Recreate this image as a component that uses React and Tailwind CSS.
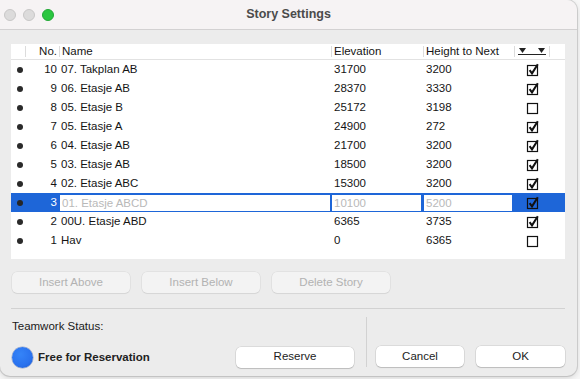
import React from "react";

const rows = [
  { no: 10, name: "07. Takplan AB", elev: "31700", next: "3200", on: true },
  { no: 9, name: "06. Etasje AB", elev: "28370", next: "3330", on: true },
  { no: 8, name: "05. Etasje B", elev: "25172", next: "3198", on: false },
  { no: 7, name: "05. Etasje A", elev: "24900", next: "272", on: true },
  { no: 6, name: "04. Etasje AB", elev: "21700", next: "3200", on: true },
  { no: 5, name: "03. Etasje AB", elev: "18500", next: "3200", on: true },
  { no: 4, name: "02. Etasje ABC", elev: "15300", next: "3200", on: true },
  { no: 3, name: "01. Etasje ABCD", elev: "10100", next: "5200", on: true, sel: true },
  { no: 2, name: "00U. Etasje ABD", elev: "6365", next: "3735", on: true },
  { no: 1, name: "Hav", elev: "0", next: "6365", on: false },
];

const Check = ({ on }) => (
  <svg width="14" height="14" viewBox="0 0 14 14">
    <rect x="1.5" y="2.5" width="10" height="10" fill="none" stroke="#111" strokeWidth="1.2" />
    {on && (
      <path d="M3.6 7.2 L6 10.4 L11.8 1.2" fill="none" stroke="#111" strokeWidth="2" strokeLinejoin="miter" />
    )}
  </svg>
);

const Sep = () => <div className="w-px h-[11px] bg-[#dcdcdc]" />;

const Button = ({ children, w, disabled }) => (
  <div
    className={`${w} h-[21px] rounded-[5px] flex items-center justify-center text-[11.5px] ${
      disabled
        ? "bg-[#f3f3f3] text-[#b2b2b2] shadow-[0_0_0_0.5px_rgba(0,0,0,0.08),0_1px_1px_rgba(0,0,0,0.06)]"
        : "bg-white text-[#1c1c1c] shadow-[0_0_0_0.5px_rgba(0,0,0,0.14),0_1px_1px_rgba(0,0,0,0.14)]"
    }`}
  >
    {children}
  </div>
);

export default function App() {
  return (
    <div className="w-[580px] h-[379px] bg-[#f7f7f7] overflow-hidden font-['Liberation_Sans',Arial,sans-serif]">
      <div className="w-[577px] h-[376px] rounded-tr-[10px] rounded-b-[10px] bg-[#ececec] overflow-hidden shadow-[0_0_0_1px_rgba(0,0,0,0.12),0_2px_6px_rgba(0,0,0,0.15)] flex flex-col">
        {/* title bar */}
        <div className="h-[30px] bg-[#f6f3f4] border-b border-[#d3d1d2] flex items-center">
          <div className="w-[60px] flex items-center gap-[7px] pl-[4px]">
            <div className="w-[12px] h-[12px] rounded-full bg-[#dcdbdb] border border-[#c8c7c7]" />
            <div className="w-[12px] h-[12px] rounded-full bg-[#dcdbdb] border border-[#c8c7c7]" />
            <div className="w-[12px] h-[12px] rounded-full bg-[#2bc640] border border-[#22a836]" />
          </div>
          <div className="flex-1 text-center text-[12.5px] font-bold text-[#4b4b4b]">Story Settings</div>
          <div className="w-[60px]" />
        </div>

        {/* table */}
        <div className="pt-[14px] pl-[11px] pr-[12px]">
          <div className="h-[215px] bg-white text-[11.5px] text-[#141414]">
            <div className="h-[16px] border-b border-[#e2e2e2] flex items-center">
              <div className="w-[15px] flex justify-end"><Sep /></div>
              <div className="w-[33px] flex items-center justify-end pr-[2px]">No.</div>
              <Sep />
              <div className="w-[271px] pl-[2px]">Name</div>
              <Sep />
              <div className="w-[91px] pl-[2px]">Elevation</div>
              <Sep />
              <div className="w-[90px] pl-[2px]">Height to Next</div>
              <Sep />
              <div className="w-[34px] flex justify-center">
                <div className="flex gap-[12px] border-b border-[#222] pb-[1px] px-[1px]">
                  <svg width="7" height="5" viewBox="0 0 7 5"><path d="M0 0 H7 L3.5 5 Z" fill="#222" /></svg>
                  <svg width="7" height="5" viewBox="0 0 7 5"><path d="M0 0 H7 L3.5 5 Z" fill="#222" /></svg>
                </div>
              </div>
              <Sep />
            </div>
            {rows.map((r) =>
              r.sel ? (
                <div key={r.no} className="h-[19px] bg-[#1e66d8] flex items-center">
                  <div className="w-[15px] flex justify-center pl-[2px]">
                    <div className="w-[6px] h-[6px] rounded-full bg-[#262626]" />
                  </div>
                  <div className="w-[33px] text-right pr-[2px] text-white">{r.no}</div>
                  <div className="w-[272px] h-[16px] pl-px pr-px">
                    <div className="h-full bg-white pl-[2px] text-[#b9b9b9] leading-[16px]">{r.name}</div>
                  </div>
                  <div className="w-[92px] h-[16px] pl-px pr-[2px]">
                    <div className="h-full bg-white pl-[2px] text-[#b9b9b9] leading-[16px]">{r.elev}</div>
                  </div>
                  <div className="w-[91px] h-[16px] pl-[1px] pr-[2px]">
                    <div className="h-full bg-white pl-[2px] text-[#b9b9b9] leading-[16px]">{r.next}</div>
                  </div>
                  <div className="w-[35px] flex justify-center pl-[3px]"><Check on={r.on} /></div>
                </div>
              ) : (
                <div key={r.no} className="h-[19px] flex items-center">
                  <div className="w-[15px] flex justify-center pl-[2px]">
                    <div className="w-[6px] h-[6px] rounded-full bg-[#2a2a2a]" />
                  </div>
                  <div className="w-[33px] text-right pr-[2px]">{r.no}</div>
                  <div className="w-[272px] pl-[2px]">{r.name}</div>
                  <div className="w-[92px] pl-[3px]">{r.elev}</div>
                  <div className="w-[91px] pl-[3px]">{r.next}</div>
                  <div className="w-[35px] flex justify-center pl-[3px]"><Check on={r.on} /></div>
                </div>
              )
            )}
          </div>
        </div>

        {/* story buttons */}
        <div className="flex gap-[12px] pl-[12px] pt-[13px]">
          <Button w="w-[118px]" disabled>Insert Above</Button>
          <Button w="w-[118px]" disabled>Insert Below</Button>
          <Button w="w-[118px]" disabled>Delete Story</Button>
        </div>

        <div className="ml-[11px] mr-[12px] mt-[15px] h-px bg-[#d2d2d2]" />

        {/* bottom */}
        <div className="flex pl-[12px] pr-[12px] pt-[8px]">
          <div className="w-[342px] flex flex-col text-[11.5px] text-[#1a1a1a]">
            <div className="h-[16px] leading-[16px] mt-[1px]">Teamwork Status:</div>
            <div className="flex items-center mt-[13px]">
              <div className="w-[21px] h-[21px] rounded-full bg-[radial-gradient(circle_at_40%_35%,#3584f8,#2a72ee_60%,#1f5bcc)] shadow-[0_0_0_0.5px_rgba(0,40,120,0.35)]" />
              <div className="ml-[5px] font-bold text-[#222]">Free for Reservation</div>
              <div className="ml-auto mt-[-1px]">
                <Button w="w-[118px]">Reserve</Button>
              </div>
            </div>
          </div>
          <div className="w-px h-[50px] bg-[#d2d2d2] ml-[12px]" />
          <div className="flex items-end gap-[12px] ml-[9px] pb-[1px]">
            <Button w="w-[88px]">Cancel</Button>
            <Button w="w-[89px]">OK</Button>
          </div>
        </div>
      </div>
    </div>
  );
}
